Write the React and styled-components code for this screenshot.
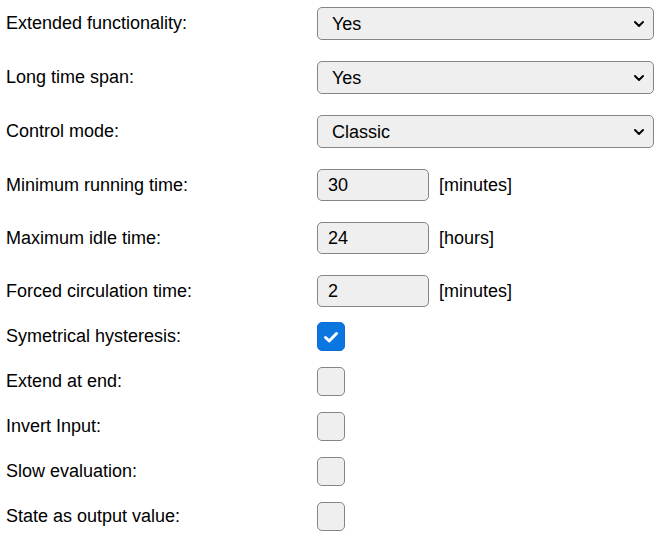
import styled, { createGlobalStyle } from 'styled-components'

const GlobalStyle = createGlobalStyle`
    html, body {
        margin: 0;
        padding: 0;
        background: #fff;
    }
    body {
        font-family: "Liberation Sans", Arial, sans-serif;
        font-size: 18px;
        color: #000;
    }
`

const chevron = "url(\"data:image/svg+xml;utf8,<svg xmlns='http://www.w3.org/2000/svg' width='10' height='6' viewBox='0 0 10 6'><path d='M1 1 L5 5 L9 1' fill='none' stroke='%23000' stroke-width='1.9' stroke-linecap='round' stroke-linejoin='round'/></svg>\")"

const selects = [
    { label: 'Extended functionality:', value: 'Yes', options: ['Yes', 'No'] },
    { label: 'Long time span:', value: 'Yes', options: ['Yes', 'No'] },
    { label: 'Control mode:', value: 'Classic', options: ['Classic', 'Modern'] },
]

const numbers = [
    { label: 'Minimum running time:', value: '30', unit: '[minutes]' },
    { label: 'Maximum idle time:', value: '24', unit: '[hours]' },
    { label: 'Forced circulation time:', value: '2', unit: '[minutes]' },
]

const checks = [
    { label: 'Symetrical hysteresis:', checked: true },
    { label: 'Extend at end:', checked: false },
    { label: 'Invert Input:', checked: false },
    { label: 'Slow evaluation:', checked: false },
    { label: 'State as output value:', checked: false },
]

function App() {
    return (
        <>
            <GlobalStyle />
            <Form>
                {selects.map((s, i) => (
                    <Row key={s.label} $space={i === 0 ? 7 : 21}>
                        <Label>{s.label}</Label>
                        <Select defaultValue={s.value}>
                            {s.options.map(o => <option key={o}>{o}</option>)}
                        </Select>
                    </Row>
                ))}
                {numbers.map(n => (
                    <Row key={n.label} $space={21}>
                        <Label>{n.label}</Label>
                        <Field>
                            <NumberInput type="text" defaultValue={n.value} />
                            <Unit>{n.unit}</Unit>
                        </Field>
                    </Row>
                ))}
                {checks.map((c, i) => (
                    <Row key={c.label} $space={i === 0 ? 15 : 16}>
                        <Label>{c.label}</Label>
                        <Check $checked={c.checked}>
                            {c.checked ? (
                                <svg width="18" height="18" viewBox="0 0 18 18">
                                    <path d="M3.5 9.5 L7.2 13 L14.5 5.5" fill="none" stroke="#fff" strokeWidth="3" strokeLinecap="round" strokeLinejoin="round" />
                                </svg>
                            ) : null}
                        </Check>
                    </Row>
                ))}
            </Form>
        </>
    )
}

export default App

const Form = styled.form`
    display: flex;
    flex-direction: column;
    width: 656px;
`

const Row = styled.div`
    display: grid;
    grid-template-columns: 311px 1fr;
    align-items: center;
    margin-top: ${props => props.$space}px;
    padding-left: 6px;
    padding-right: 2px;
`

const Label = styled.label`
    font-size: 18px;
    white-space: nowrap;
`

const Select = styled.select`
    appearance: none;
    height: 33px;
    width: 100%;
    box-sizing: border-box;
    border: 1px solid #858585;
    border-radius: 5px;
    background: #efefef ${chevron} no-repeat right 9px center;
    font-family: "Liberation Sans", Arial, sans-serif;
    font-size: 18px;
    color: #000;
    padding: 0 28px 0 14px;
    margin: 0;
`

const Field = styled.div`
    display: flex;
    align-items: center;
    gap: 10px;
`

const NumberInput = styled.input`
    width: 112px;
    height: 32px;
    box-sizing: border-box;
    border: 1px solid #858585;
    border-radius: 5px;
    background: #efefef;
    font-family: "Liberation Sans", Arial, sans-serif;
    font-size: 18px;
    color: #000;
    padding: 0 10px;
    margin: 0;
`

const Unit = styled.span`
    font-size: 18px;
`

const Check = styled.span`
    width: 28px;
    height: 29px;
    box-sizing: border-box;
    border-radius: 5px;
    display: flex;
    align-items: center;
    justify-content: center;
    border: 1px solid ${props => props.$checked ? '#0a6fd6' : '#858585'};
    background: ${props => props.$checked ? '#0b76e0' : '#efefef'};
`
